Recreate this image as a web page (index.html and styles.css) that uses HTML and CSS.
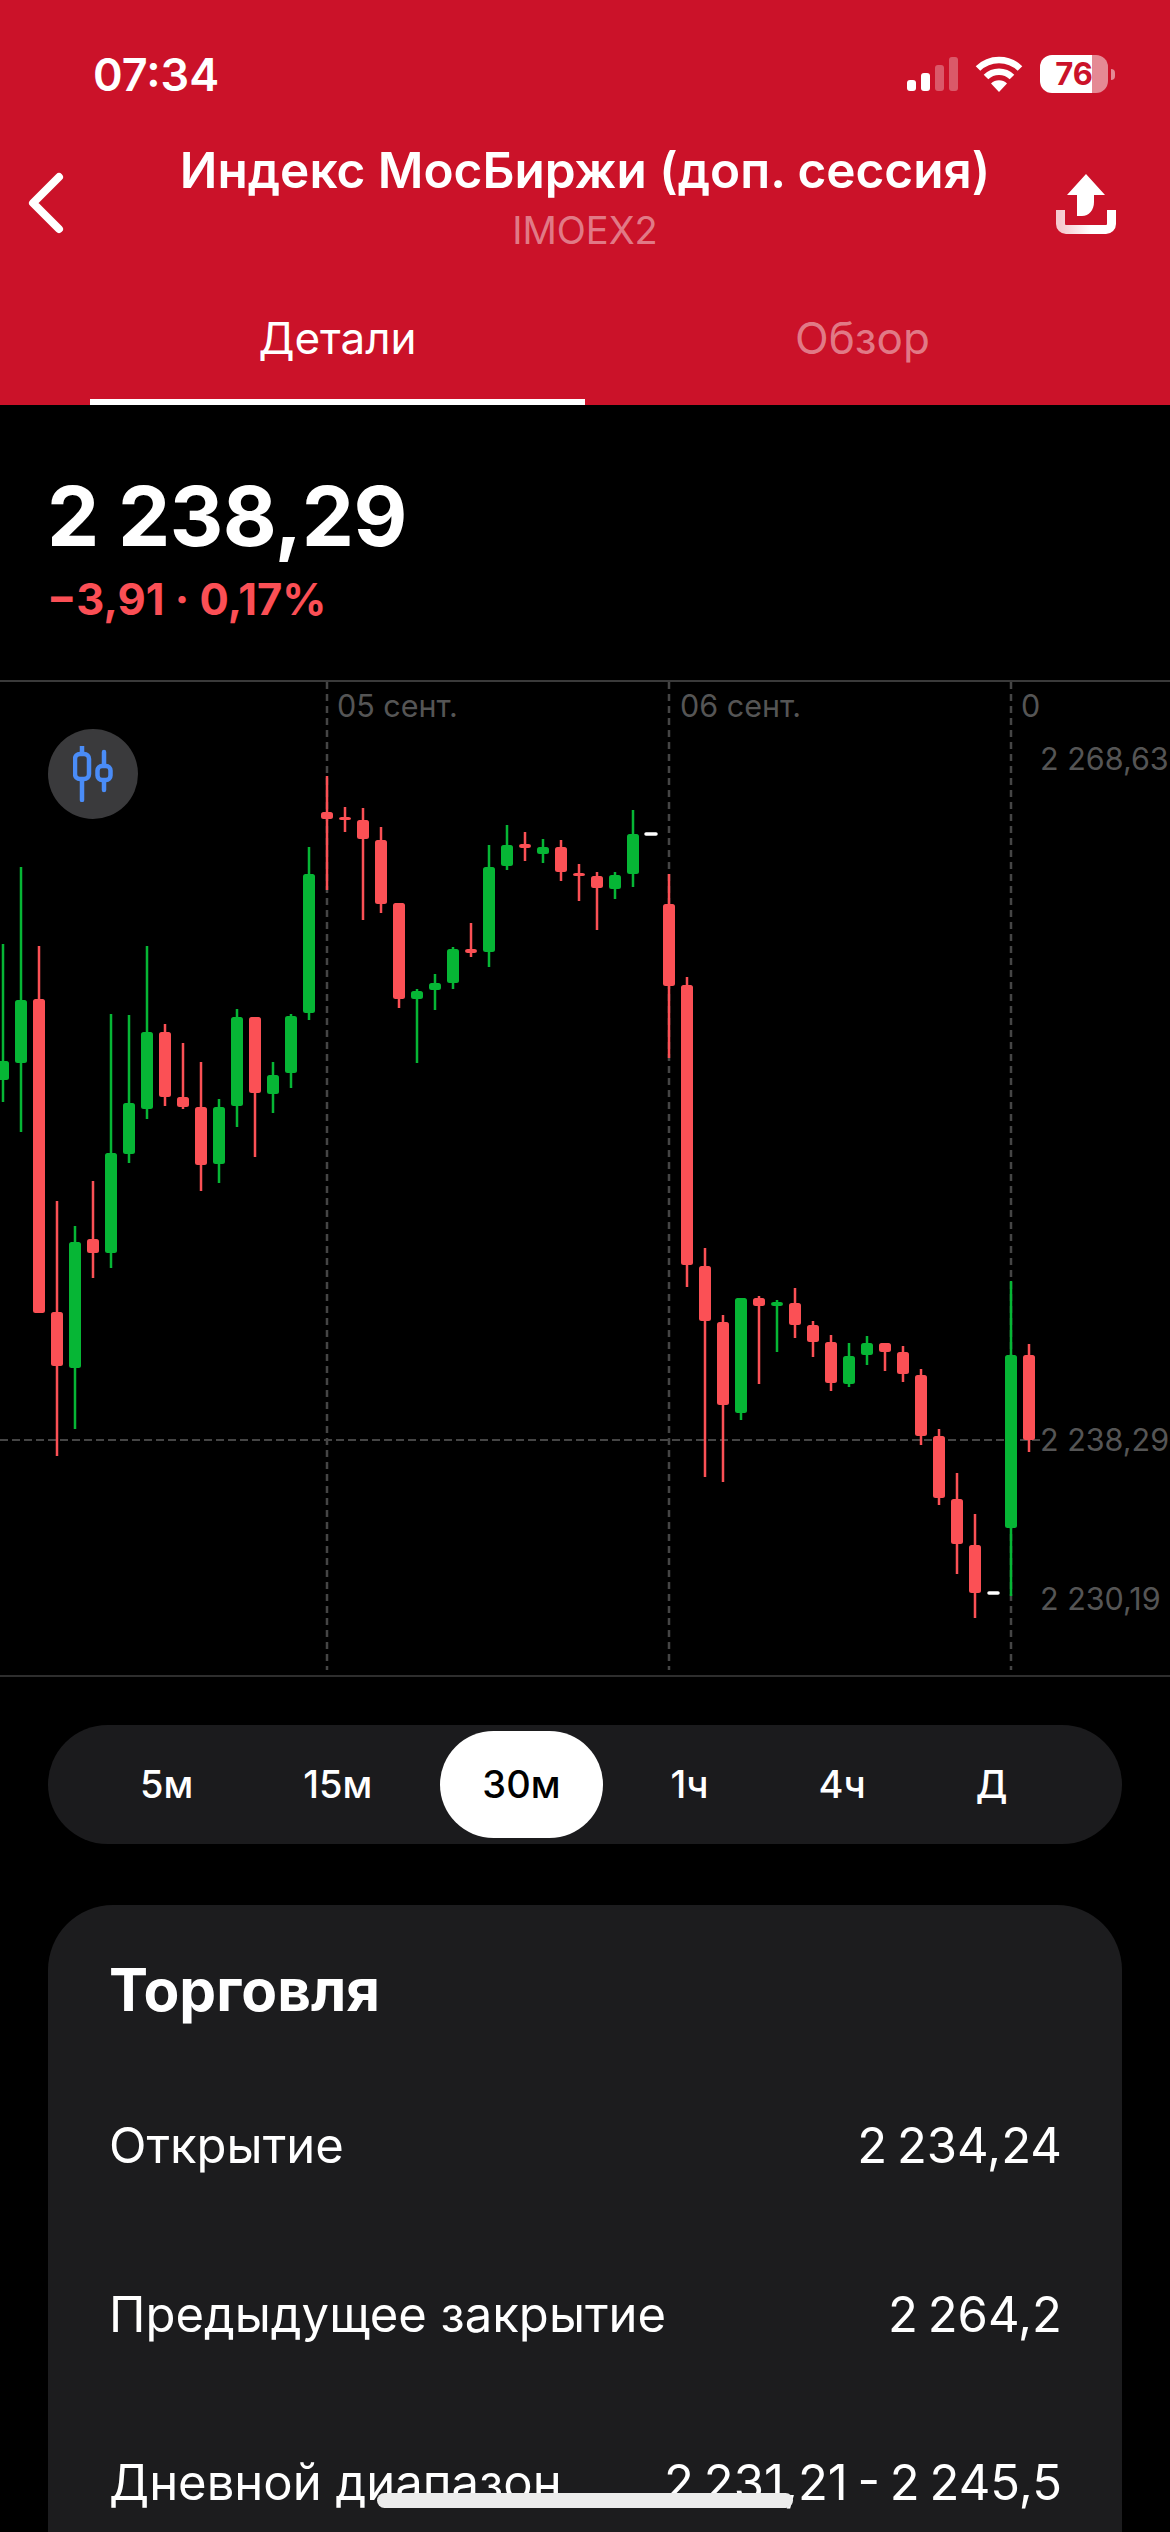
FILE: index.html
```html
<!DOCTYPE html>
<html>

<head lang="ru">
    <meta charset="UTF-8">
    <title>Индекс МосБиржи</title>
    <link rel="stylesheet" href="styles.css">
</head>

<body>
    <div class="top">
        <div class="status">
            <div class="status-time">07:34</div>
            <div class="status-icons">
                <svg class="signal" width="51" height="34" viewBox="0 0 51 34">
                    <rect x="0" y="23" width="9" height="11" rx="3" />
                    <rect x="14" y="16" width="9" height="18" rx="3" />
                    <rect class="signal-off" x="28" y="8" width="9" height="26" rx="3" />
                    <rect class="signal-off" x="42" y="0" width="9" height="34" rx="3" />
                </svg>
                <svg class="wifi" width="48" height="36" viewBox="0 0 48 36">
                    <path class="wifi-arc" d="M3 12.500A30 30 0 0 1 45 12.500" />
                    <path class="wifi-arc" d="M11 21A18.500 18.500 0 0 1 37 21" />
                    <path class="wifi-dot" d="M24 36L16 27.500A11.500 11.500 0 0 1 32 27.500Z" />
                </svg>
                <div class="battery">
                    <div class="battery-body">76</div>
                    <div class="battery-nub"></div>
                </div>
            </div>
        </div>
        <div class="nav">
            <svg class="back" width="36" height="62" viewBox="0 0 36 62">
                <path d="M31 5L5 31L31 57" />
            </svg>
            <div class="nav-title">
                <div class="name">Индекс МосБиржи (доп. сессия)</div>
                <div class="ticker">IMOEX2</div>
            </div>
            <svg class="share" width="60" height="60" viewBox="0 0 60 60">
                <defs>
                    <linearGradient id="tray">
                        <stop offset="0" stop-color="#f6c9ce" />
                        <stop offset="0.6" stop-color="#ffffff" />
                    </linearGradient>
                </defs>
                <path class="share-arrow" d="M30 0L49 21H38V28C38 36 33 42 26 42H21V21H11Z" />
                <path class="share-tray" d="M4.500 36V50A5.500 5.500 0 0 0 10 55.500H50A5.500 5.500 0 0 0 55.500 50V36" />
            </svg>
        </div>
        <div class="tabs">
            <div class="tab tab-active">Детали</div>
            <div class="tab">Обзор</div>
        </div>
    </div>

    <div class="price">
        <div class="price-value">2 238,29</div>
        <div class="price-change">−3,91 · 0,17%</div>
    </div>

    <div class="chart">
        <svg width="1170" height="993" viewBox="0 682 1170 993">
            <path class="grid-v" d="M327 682V1670M669 682V1670M1011 682V1670" />
            <path class="grid-h" d="M0 1440H1040" />

            <text class="axis" x="337" y="717">05 сент.</text>
            <text class="axis" x="680" y="717">06 сент.</text>
            <text class="axis" x="1021" y="717">0</text>
            <text class="axis" x="1040" y="770">2 268,63</text>
            <text class="axis" x="1040" y="1451">2 238,29</text>
            <text class="axis" x="1040" y="1610">2 230,19</text>

            <!-- green candles -->
            <g class="up">
                <path d="M3 944V1102M21 867V1132M75 1226V1429M111 1014V1268M129 1015V1163M147 946V1119M219 1099V1183M237 1009V1127M273 1062V1113M291 1014V1088M309 847V1020M417 989V1063M435 974V1010M453 947V989M489 845V967M507 825V870M543 839V863M615 872V899M633 810V887M741 1298V1420M777 1300V1352M849 1343V1387M867 1336V1365M1011 1281V1596" />
                <rect x="-3" y="1061" height="19" />
                <rect x="15" y="1000" height="63" />
                <rect x="69" y="1242" height="126" />
                <rect x="105" y="1153" height="100" />
                <rect x="123" y="1103" height="51" />
                <rect x="141" y="1032" height="77" />
                <rect x="213" y="1107" height="57" />
                <rect x="231" y="1017" height="89" />
                <rect x="267" y="1075" height="19" />
                <rect x="285" y="1016" height="57" />
                <rect x="303" y="874" height="139" />
                <rect x="411" y="991" height="8" />
                <rect x="429" y="983" height="7" />
                <rect x="447" y="949" height="34" />
                <rect x="483" y="867" height="85" />
                <rect x="501" y="845" height="21" />
                <rect x="537" y="847" height="7" />
                <rect x="609" y="875" height="14" />
                <rect x="627" y="834" height="40" />
                <rect x="735" y="1298" height="115" />
                <rect x="771" y="1302" height="4" />
                <rect x="843" y="1356" height="28" />
                <rect x="861" y="1343" height="12" />
                <rect x="1005" y="1355" height="173" />
            </g>

            <!-- red candles -->
            <g class="down">
                <path d="M39 946V1313M57 1201V1456M93 1181V1278M165 1024V1106M183 1043V1109M201 1062V1191M255 1017V1157M327 776V890M345 807V832M363 808V920M381 827V913M399 903V1008M471 923V957M525 832V861M561 840V881M579 864V901M597 872V930M669 874V1058M687 977V1287M705 1248V1477M723 1315V1482M759 1296V1384M795 1288V1338M813 1321V1357M831 1335V1391M885 1343V1371M903 1346V1382M921 1369V1445M939 1429V1505M957 1473V1574M975 1514V1618M1029 1344V1452" />
                <rect x="33" y="999" height="314" />
                <rect x="51" y="1312" height="54" />
                <rect x="87" y="1239" height="14" />
                <rect x="159" y="1032" height="65" />
                <rect x="177" y="1097" height="10" />
                <rect x="195" y="1107" height="58" />
                <rect x="249" y="1017" height="76" />
                <rect x="321" y="812" height="7" />
                <rect x="339" y="817" height="3" />
                <rect x="357" y="820" height="19" />
                <rect x="375" y="840" height="64" />
                <rect x="393" y="903" height="96" />
                <rect x="465" y="949" height="4" />
                <rect x="519" y="844" height="4" />
                <rect x="555" y="847" height="25" />
                <rect x="573" y="873" height="3" />
                <rect x="591" y="876" height="12" />
                <rect x="663" y="904" height="82" />
                <rect x="681" y="985" height="280" />
                <rect x="699" y="1266" height="55" />
                <rect x="717" y="1322" height="83" />
                <rect x="753" y="1298" height="8" />
                <rect x="789" y="1303" height="22" />
                <rect x="807" y="1325" height="17" />
                <rect x="825" y="1342" height="41" />
                <rect x="879" y="1343" height="9" />
                <rect x="897" y="1352" height="22" />
                <rect x="915" y="1375" height="61" />
                <rect x="933" y="1436" height="62" />
                <rect x="951" y="1499" height="45" />
                <rect x="969" y="1545" height="48" />
                <rect x="1023" y="1355" height="85" />
            </g>

            <!-- high / low marks -->
            <path class="mark" d="M646 834H656M989 1593H998" />
        </svg>
        <div class="chart-type">
            <svg width="40" height="56" viewBox="0 0 40 56">
                <path d="M9 0V54M31 6V44" />
                <rect class="chart-type-body" x="2" y="8" width="14" height="25" rx="5" />
                <rect class="chart-type-body" x="24.500" y="20" width="13" height="14" rx="4.500" />
            </svg>
        </div>
    </div>

    <div class="range">
        <div class="range-item">5м</div>
        <div class="range-item">15м</div>
        <div class="range-item range-active">30м</div>
        <div class="range-item">1ч</div>
        <div class="range-item">4ч</div>
        <div class="range-item">Д</div>
    </div>

    <div class="card">
        <div class="card-title">Торговля</div>
        <div class="row"><span>Открытие</span><span class="row-value">2 234,24</span></div>
        <div class="row"><span>Предыдущее закрытие</span><span class="row-value">2 264,2</span></div>
        <div class="row"><span>Дневной диапазон</span><span class="row-value">2 231,21 - 2 245,5</span></div>
    </div>

    <div class="home-bar"></div>
</body>

</html>
```

FILE: styles.css
```css
html,
body {
    margin: 0;
    padding: 0;
    height: 2532px;
    overflow: hidden;
    background: #000000;
}

body {
    position: relative;
    font-family: Inter, "Noto Sans", sans-serif;
    color: #ffffff;
}

.top {
    height: 405px;
    background: #cb1229;
}

.status {
    height: 148px;
    display: flex;
    align-items: center;
    justify-content: space-between;
    padding: 0 55px 0 93px;
}

.status-time {
    font-size: 45px;
    font-weight: 600;
}

.status-icons {
    display: flex;
    align-items: center;
    gap: 17px;
}

.signal rect {
    fill: #ffffff;
}

.signal .signal-off {
    fill: rgba(255, 255, 255, .3);
}

.wifi-arc {
    fill: none;
    stroke: #ffffff;
    stroke-width: 6.5;
}

.wifi-dot {
    fill: #ffffff;
}

.battery {
    display: flex;
    align-items: center;
    gap: 3px;
}

.battery-body {
    width: 68px;
    height: 38px;
    border-radius: 12px;
    background: linear-gradient(90deg, #ffffff 76%, rgba(255, 255, 255, .5) 76%);
    color: #cb1229;
    font-size: 31px;
    font-weight: 700;
    line-height: 38px;
    text-align: center;
}

.battery-nub {
    width: 4px;
    height: 11px;
    border-radius: 0 4px 4px 0;
    background: rgba(255, 255, 255, .5);
}

.nav {
    height: 108px;
    display: grid;
    grid-template-columns: 150px 1fr 150px;
    align-items: center;
}

.back {
    margin-left: 28px;
    margin-top: 2px;
}

.back path {
    fill: none;
    stroke: #ffffff;
    stroke-width: 8;
    stroke-linecap: round;
    stroke-linejoin: round;
}

.nav-title {
    text-align: center;
}

.name {
    margin: -6px -20px 0;
    font-size: 49.5px;
    font-weight: 600;
    line-height: 56px;
    white-space: nowrap;
}

.ticker {
    margin-top: 6px;
    font-size: 38px;
    line-height: 52px;
    color: rgba(255, 255, 255, .45);
}

.share {
    justify-self: end;
    margin-right: 54px;
    margin-top: 4px;
}

.share-arrow {
    fill: #ffffff;
}

.share-tray {
    fill: none;
    stroke: url(#tray);
    stroke-width: 9;
}

.tabs {
    height: 149px;
    display: flex;
    padding: 0 30px 0 90px;
}

.tab {
    flex: 1;
    box-sizing: border-box;
    padding-top: 54px;
    text-align: center;
    font-size: 44px;
    line-height: 56px;
    color: rgba(255, 255, 255, .45);
}

.tab-active {
    flex: 0 0 495px;
    color: #ffffff;
    border-bottom: 6px solid #ffffff;
}

.price {
    height: 275px;
    box-sizing: border-box;
    padding: 63px 0 0 47px;
}

.price-value {
    font-size: 83px;
    font-weight: 700;
    line-height: 96px;
    letter-spacing: -.5px;
}

.price-change {
    margin-top: 10px;
    font-size: 43.5px;
    font-weight: 700;
    line-height: 50px;
    color: #fb4f55;
}

.chart {
    position: relative;
    border-top: 2px solid #3a3a3a;
    border-bottom: 2px solid #2e2e2e;
}

.chart>svg {
    display: block;
}

.grid-v,
.grid-h {
    fill: none;
    stroke: #454545;
    stroke-width: 2.500;
}

.grid-v {
    stroke-dasharray: 7 5;
}

.grid-h {
    stroke-dasharray: 8 4;
    stroke-width: 2;
}

.axis {
    font-size: 30.5px;
    fill: #555555;
}

.up path,
.down path {
    fill: none;
    stroke-width: 2.500;
}

.up rect,
.down rect {
    width: 12px;
    rx: 2.500px;
}

.up path {
    stroke: #06b635;
}

.up rect {
    fill: #06b635;
}

.down path {
    stroke: #fb5055;
}

.down rect {
    fill: #fb5055;
}

.mark {
    fill: none;
    stroke: #ffffff;
    stroke-width: 3.500;
    stroke-linecap: round;
}

.chart-type {
    position: absolute;
    left: 48px;
    top: 47px;
    width: 90px;
    height: 90px;
    border-radius: 50%;
    background: #3a3a3c;
    display: flex;
    align-items: center;
    justify-content: center;
}

.chart-type path {
    fill: none;
    stroke: #4a8cf7;
    stroke-width: 4.500;
    stroke-linecap: round;
}

.chart-type-body {
    fill: #3a3a3c;
    stroke: #4a8cf7;
    stroke-width: 4.500;
}

.range {
    height: 119px;
    margin: 48px 48px 0;
    box-sizing: border-box;
    padding: 6px 50px;
    border-radius: 60px;
    background: #1b1b1d;
    display: flex;
    gap: 26px;
}

.range-item {
    padding: 0 42px;
    border-radius: 54px;
    font-size: 38px;
    font-weight: 500;
    line-height: 107px;
}

.range-active {
    background: #ffffff;
    color: #000000;
}

.card {
    height: 700px;
    margin: 61px 48px 0;
    padding: 0 60px 0 61px;
    border-radius: 65px;
    background: #1c1c1e;
}

.card-title {
    padding-top: 52px;
    font-size: 58.5px;
    font-weight: 700;
    line-height: 66px;
    margin-bottom: 95px;
}

.row {
    height: 168.500px;
    display: flex;
    justify-content: space-between;
    font-size: 49px;
    line-height: 56px;
    white-space: nowrap;
}

.row-value {
    word-spacing: -4px;
}

.home-bar {
    position: absolute;
    left: 377px;
    top: 2493px;
    width: 416px;
    height: 15px;
    border-radius: 8px;
    background: #ececec;
}
```
